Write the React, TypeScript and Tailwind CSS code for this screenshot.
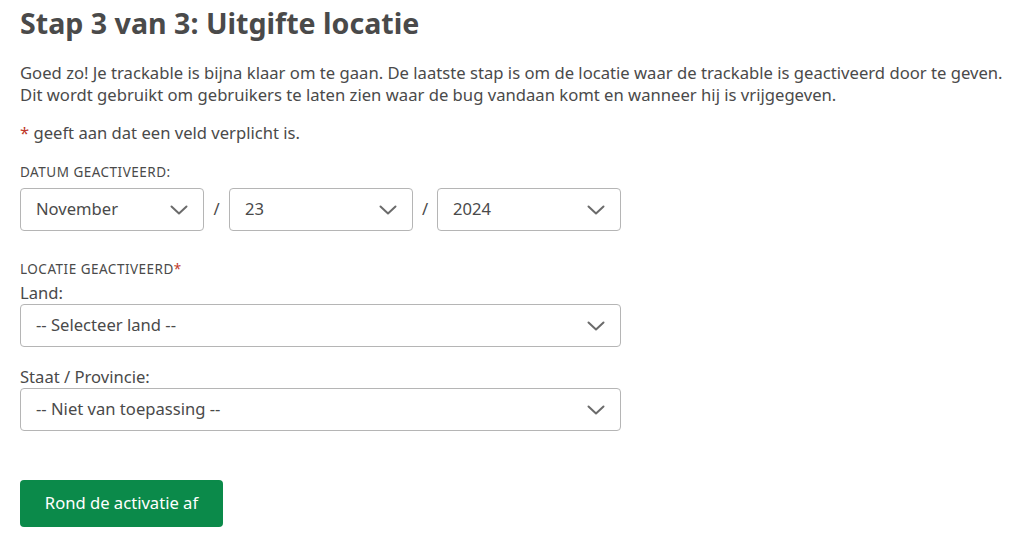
import React from "react";

function Chevron() {
  return (
    <svg width="18" height="10" viewBox="0 0 18 10" fill="none" className="shrink-0">
      <path d="M1.5 1.5L9 8.5L16.5 1.5" stroke="#6b6b6b" strokeWidth="2" strokeLinecap="round" strokeLinejoin="round" />
    </svg>
  );
}

function Select({ value, className = "" }: { value: string; className?: string }) {
  return (
    <div
      className={`flex h-[43px] items-center justify-between rounded-[4px] border border-[#b5b5b5] bg-white pl-[15px] pr-[15px] text-[16.6px] text-[#4a4a4a] ${className}`}
    >
      <span>{value}</span>
      <Chevron />
    </div>
  );
}

export default function App() {
  return (
    <div
      className="min-h-[545px] bg-white px-5 text-[#4a4a4a]"
      style={{ fontFamily: '"Noto Sans", "Open Sans", sans-serif' }}
    >
      <h1 className="pt-[3px] text-[28.6px] font-bold leading-[40px] text-[#4a4a4a]">Stap 3 van 3: Uitgifte locatie</h1>

      <p className="mt-[19px] text-[16.65px] leading-[22px]">
        Goed zo! Je trackable is bijna klaar om te gaan. De laatste stap is om de locatie waar de trackable is geactiveerd door te geven.
        <br />
        Dit wordt gebruikt om gebruikers te laten zien waar de bug vandaan komt en wanneer hij is vrijgegeven.
      </p>

      <p className="mt-[16px] text-[16.6px] leading-[22px]">
        <span className="text-[#c0392b]">*</span> geeft aan dat een veld verplicht is.
      </p>

      <div className="mt-[19px] text-[13.5px] uppercase leading-[18px] tracking-[0.5px]">Datum geactiveerd:</div>
      <div className="mt-[7px] flex items-center">
        <Select value="November" className="w-[184px]" />
        <span className="w-[25px] text-center text-[16.6px]">/</span>
        <Select value="23" className="w-[184px]" />
        <span className="w-[24px] text-center text-[16.6px]">/</span>
        <Select value="2024" className="w-[184px]" />
      </div>

      <div className="mt-[29px] text-[13.5px] uppercase leading-[18px] tracking-[0.5px]">
        Locatie geactiveerd<span className="text-[#c0392b]">*</span>
      </div>
      <div className="mt-[4px] text-[16.6px] leading-[22px]">Land:</div>
      <Select value="-- Selecteer land --" className="w-[601px]" />

      <div className="mt-[19px] text-[16.6px] leading-[22px]">Staat / Provincie:</div>
      <Select value="-- Niet van toepassing --" className="w-[601px]" />

      <button className="mt-[49px] h-[47px] w-[203px] rounded-[4px] bg-[#0b8a4a] text-[16.6px] text-white">
        Rond de activatie af
      </button>
    </div>
  );
}
